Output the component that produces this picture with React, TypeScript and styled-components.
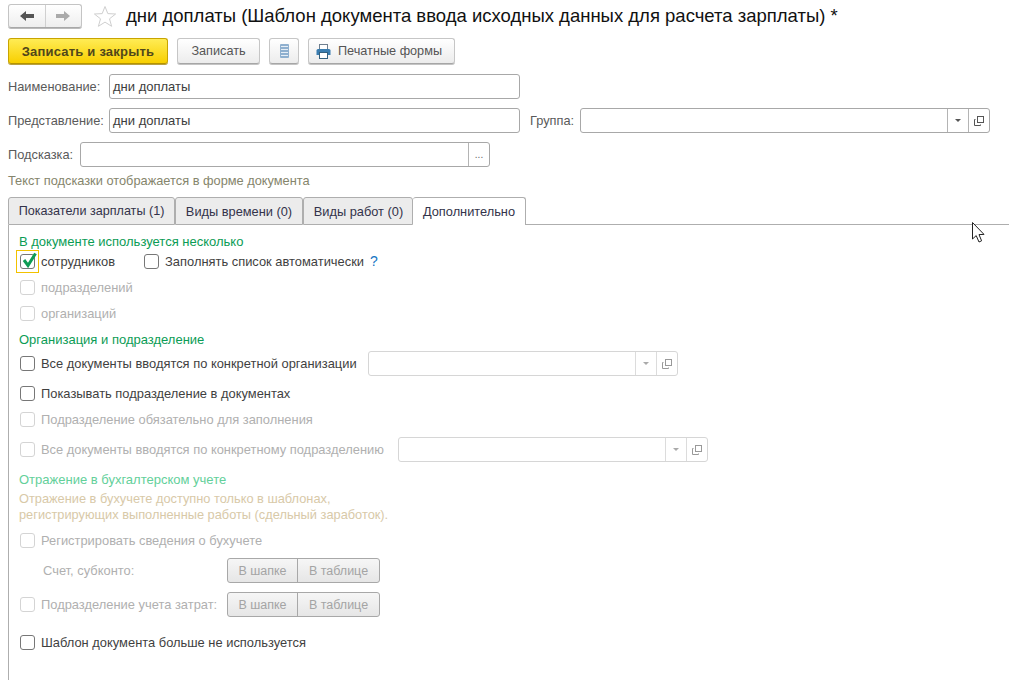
import React from "react";
import styled, { createGlobalStyle } from "styled-components";

const Global = createGlobalStyle`
  html, body { margin: 0; padding: 0; background: #fff; overflow: hidden; }
  body { font-family: "Liberation Sans", Arial, sans-serif; font-size: 13px; color: #4a4a4a; }
  * { box-sizing: border-box; }
`;

const Page = styled.div`
  position: relative;
  width: 1009px;
  height: 680px;
  overflow: hidden;
  padding: 4px 0 0 8px;
  display: flex;
  flex-direction: column;
`;

const TitleBar = styled.div`
  display: flex;
  align-items: center;
  height: 24px;
`;
const NavGroup = styled.div`
  display: flex;
  width: 74px;
  height: 24px;
  border: 1px solid #c4c4c4;
  border-bottom-color: #a8a8a8;
  border-radius: 3px;
  background: linear-gradient(#fff, #eeeeee);
  box-shadow: 0 1px 0 #bbb;
`;
const NavBtn = styled.div<{ $first?: boolean }>`
  flex: 1;
  display: flex;
  align-items: center;
  justify-content: center;
  border-right: ${(p) => (p.$first ? "1px solid #d0d0d0" : "none")};
`;
const StarWrap = styled.div`
  margin-left: 10px;
  width: 25px;
  height: 24px;
  display: flex;
  align-items: center;
  justify-content: center;
`;
const Title = styled.div`
  margin-left: 9px;
  font-size: 18.5px;
  color: #111;
  white-space: nowrap;
`;

const Toolbar = styled.div`
  display: flex;
  align-items: center;
  height: 26px;
  margin-top: 10px;
`;
const Btn = styled.div<{ $w: number; $ml?: number; $pr?: number; $primary?: boolean }>`
  width: ${(p) => p.$w}px;
  height: 26px;
  margin-left: ${(p) => p.$ml ?? 0}px;
  padding-right: ${(p) => p.$pr ?? 0}px;
  display: flex;
  align-items: center;
  justify-content: center;
  gap: 7px;
  border-radius: 3px;
  border: 1px solid ${(p) => (p.$primary ? "#c8a400" : "#c6c6c6")};
  border-bottom-color: ${(p) => (p.$primary ? "#b59400" : "#a6a6a6")};
  background: ${(p) =>
    p.$primary ? "linear-gradient(#ffec55, #f8cf00)" : "linear-gradient(#ffffff, #ececec)"};
  box-shadow: 0 1px 0 ${(p) => (p.$primary ? "#b8a040" : "#c4c4c4")};
  font-weight: ${(p) => (p.$primary ? 700 : 400)};
  font-size: ${(p) => (p.$primary ? "13px" : "12.7px")};
  letter-spacing: ${(p) => (p.$primary ? "0.2px" : "0")};
  color: ${(p) => (p.$primary ? "#50471a" : "#555")};
`;

const FormRow = styled.div<{ $mt: number }>`
  display: flex;
  align-items: center;
  height: 25px;
  margin-top: ${(p) => p.$mt}px;
`;
const FormLabel = styled.span<{ $w: number; $ml?: number }>`
  width: ${(p) => p.$w}px;
  margin-left: ${(p) => p.$ml ?? 0}px;
  color: #5a5a5a;
  font-size: 12.8px;
  white-space: nowrap;
  flex: none;
`;
const Field = styled.div<{ $w: number; $off?: boolean }>`
  width: ${(p) => p.$w}px;
  height: 25px;
  flex: none;
  display: flex;
  align-items: stretch;
  border: 1px solid ${(p) => (p.$off ? "#d6d6d6" : "#a8a8a8")};
  border-radius: 3px;
  background: #fff;
`;
const FieldText = styled.div`
  flex: 1;
  padding-left: 3px;
  color: #3c3c3c;
  line-height: 23px;
`;
const FieldBtn = styled.div<{ $w?: number; $off?: boolean }>`
  width: ${(p) => p.$w ?? 21}px;
  flex: none;
  display: flex;
  align-items: center;
  justify-content: center;
  border-left: 1px solid ${(p) => (p.$off ? "#dcdcdc" : "#b4b4b4")};
  color: #666;
  font-size: 10px;
`;
const Note = styled.div`
  margin-top: 6px;
  height: 16px;
  line-height: 16px;
  font-size: 12.8px;
  color: #85856c;
`;

const Tabs = styled.div`
  display: flex;
  height: 28px;
  margin-top: 8px;
  flex: none;
`;
const Tab = styled.div<{ $w: number; $active?: boolean; $fs?: number; $pl?: number }>`
  width: ${(p) => p.$w}px;
  height: 28px;
  padding-left: ${(p) => p.$pl ?? 0}px;
  display: flex;
  align-items: center;
  justify-content: center;
  font-size: ${(p) => p.$fs ?? 12.8}px;
  border: 1px solid #aeaeae;
  border-left-width: ${(p) => (p.$active ? 0 : 1)}px;
  border-bottom: ${(p) => (p.$active ? "none" : "1px solid #aeaeae")};
  border-radius: 3px 3px 0 0;
  background: ${(p) => (p.$active ? "#fff" : "#ececec")};
  color: #33334a;
`;
const TabRest = styled.div`
  flex: 1;
  border-bottom: 1px solid #aeaeae;
`;
const Panel = styled.div`
  flex: 1;
  border-left: 1px solid #aeaeae;
  padding: 8px 0 0 11px;
`;
const Heading = styled.div<{ $mt?: number; $off?: boolean }>`
  height: 16px;
  line-height: 18px;
  margin: ${(p) => p.$mt ?? 0}px 0 0 -1px;
  color: ${(p) => (p.$off ? "#63d09a" : "#0b9c55")};
`;
const Row = styled.div<{ $mt?: number; $h?: number }>`
  display: flex;
  align-items: center;
  height: ${(p) => p.$h ?? 24}px;
  margin-top: ${(p) => p.$mt ?? 0}px;
`;
const Box = styled.span<{ $off?: boolean }>`
  width: 15px;
  height: 15px;
  flex: none;
  position: relative;
  border: 1px solid ${(p) => (p.$off ? "#d4d4d4" : "#777")};
  border-radius: 3px;
  background: #fff;
`;
const FocusRing = styled.span`
  position: absolute;
  left: -5px;
  top: -5px;
  width: 23px;
  height: 23px;
  border: 1px solid #f2c200;
`;
const Tick = styled.svg`
  position: absolute;
  left: 0;
  top: -3px;
`;
const CheckLabel = styled.span<{ $off?: boolean; $ml?: number; $w?: number }>`
  margin-left: ${(p) => p.$ml ?? 6}px;
  color: ${(p) => (p.$off ? "#b0b0b0" : "#3f3f3f")};
  font-size: 12.9px;
  white-space: nowrap;
  width: ${(p) => (p.$w ? `${p.$w}px` : "auto")};
  flex: none;
`;
const Help = styled.span`
  margin-left: 6px;
  color: #1676c4;
  font-size: 14px;
`;
const Spacer = styled.span<{ $w: number }>`
  width: ${(p) => p.$w}px;
  flex: none;
`;
const Info = styled.div<{ $mt?: number }>`
  height: 16px;
  line-height: 16px;
  font-size: 12.8px;
  margin: ${(p) => p.$mt ?? 0}px 0 0 -1px;
  color: #d8c9a8;
  white-space: nowrap;
`;
const Segmented = styled.div`
  display: flex;
  width: 153px;
  height: 25px;
  flex: none;
  border: 1px solid #a8a8a8;
  border-radius: 3px;
  background: linear-gradient(#f6f6f6, #e6e6e6);
`;
const Segment = styled.div<{ $w: number; $sep?: boolean }>`
  width: ${(p) => p.$w}px;
  display: flex;
  align-items: center;
  justify-content: center;
  border-right: ${(p) => (p.$sep ? "1px solid #a8a8a8" : "none")};
  color: #a4a4a4;
  font-size: 12.5px;
`;
const Cursor = styled.svg`
  position: absolute;
  left: 972px;
  top: 222px;
`;

const ArrowLeft = ({ c }: { c: string }) => (
  <svg width="16" height="12" viewBox="0 0 16 12">
    <path d="M1 6 L7 1 V4 H15 V8 H7 V11 Z" fill={c} />
  </svg>
);
const ArrowRight = ({ c }: { c: string }) => (
  <svg width="16" height="12" viewBox="0 0 16 12">
    <path d="M15 6 L9 1 V4 H1 V8 H9 V11 Z" fill={c} />
  </svg>
);
const Star = () => (
  <svg width="24" height="23" viewBox="0 0 24 23">
    <path d="M12 1.5 L14.8 8.6 L22.6 9 L16.5 13.8 L18.6 21.3 L12 17.1 L5.4 21.3 L7.5 13.8 L1.4 9 L9.2 8.6 Z" fill="#fff" stroke="#cfcfcf" strokeWidth="1" />
  </svg>
);
const ListIcon = () => (
  <svg width="9" height="14" viewBox="0 0 9 14">
    <rect x="0" y="0" width="9" height="14" rx="1" fill="#8fb0cf" />
    <path d="M1 2.5H8M1 5.5H8M1 8.5H8M1 11.5H8" stroke="#e6eef6" strokeWidth="1.1" />
  </svg>
);
const PrintIcon = () => (
  <svg width="15" height="15" viewBox="0 0 15 15">
    <rect x="3.5" y="0.5" width="8" height="5" fill="#fff" stroke="#6f7f8f" />
    <path d="M0.5 6.5 Q0.5 5 2 5 H13 Q14.5 5 14.5 6.5 V11 H0.5 Z" fill="#3a7db0" />
    <rect x="3.5" y="8.5" width="8" height="6" fill="#fff" stroke="#33607f" />
  </svg>
);
const Drop = ({ off }: { off?: boolean }) => (
  <svg width="6" height="3" viewBox="0 0 6 3">
    <path d="M0 0H6L3 3Z" fill={off ? "#aaa" : "#555"} />
  </svg>
);
const OpenIcon = ({ off }: { off?: boolean }) => (
  <svg width="10" height="10" viewBox="0 0 10 10" fill="none" stroke={off ? "#999" : "#555"}>
    <rect x="3.5" y="0.5" width="6" height="6" />
    <path d="M1.5 3.5H0.5V9.5H6.5V8.5" />
  </svg>
);

const Check = ({ label, off, checked, ml }: { label: string; off?: boolean; checked?: boolean; ml?: number }) => (
  <>
    <Box $off={off}>
      {checked && (
        <>
          <FocusRing />
          <Tick width="16" height="16" viewBox="0 0 16 16">
            <path d="M3 8 L7 13.5 L14.5 1.5" fill="none" stroke="#0f9c55" strokeWidth="3" />
          </Tick>
        </>
      )}
    </Box>
    <CheckLabel $off={off} $ml={ml}>{label}</CheckLabel>
  </>
);

export default function App() {
  return (
    <Page>
      <Global />
      <TitleBar>
        <NavGroup>
          <NavBtn $first><ArrowLeft c="#555" /></NavBtn>
          <NavBtn><ArrowRight c="#aaa" /></NavBtn>
        </NavGroup>
        <StarWrap><Star /></StarWrap>
        <Title>дни доплаты (Шаблон документа ввода исходных данных для расчета зарплаты) *</Title>
      </TitleBar>
      <Toolbar>
        <Btn $w={160} $primary>Записать и закрыть</Btn>
        <Btn $w={83} $ml={9}>Записать</Btn>
        <Btn $w={30} $ml={9}><ListIcon /></Btn>
        <Btn $w={147} $ml={9} $pr={5}><PrintIcon />Печатные формы</Btn>
      </Toolbar>
      <FormRow $mt={10}>
        <FormLabel $w={101}>Наименование:</FormLabel>
        <Field $w={411}><FieldText>дни доплаты</FieldText></Field>
      </FormRow>
      <FormRow $mt={9}>
        <FormLabel $w={101}>Представление:</FormLabel>
        <Field $w={411}><FieldText>дни доплаты</FieldText></Field>
        <FormLabel $w={50} $ml={10}>Группа:</FormLabel>
        <Field $w={410}>
          <FieldText />
          <FieldBtn><Drop /></FieldBtn>
          <FieldBtn><OpenIcon /></FieldBtn>
        </Field>
      </FormRow>
      <FormRow $mt={9}>
        <FormLabel $w={72}>Подсказка:</FormLabel>
        <Field $w={410}>
          <FieldText />
          <FieldBtn>...</FieldBtn>
        </Field>
      </FormRow>
      <Note>Текст подсказки отображается в форме документа</Note>
      <Tabs>
        <Tab $w={167} $fs={12.6}>Показатели зарплаты (1)</Tab>
        <Tab $w={128}>Виды времени (0)</Tab>
        <Tab $w={110} $pl={1}>Виды работ (0)</Tab>
        <Tab $w={113} $active>Дополнительно</Tab>
        <TabRest />
      </Tabs>
      <Panel>
        <Heading>В документе используется несколько</Heading>
        <Row>
          <Check label="сотрудников" checked />
          <Spacer $w={29} />
          <Check label="Заполнять список автоматически" />
          <Help>?</Help>
        </Row>
        <Row $mt={2}><Check label="подразделений" off /></Row>
        <Row $mt={2}><Check label="организаций" off /></Row>
        <Heading $mt={6}>Организация и подразделение</Heading>
        <Row $mt={4} $h={25}>
          <Check label="Все документы вводятся по конкретной организации" />
          <Spacer $w={11} />
          <Field $w={310} $off>
            <FieldText />
            <FieldBtn $off><Drop off /></FieldBtn>
            <FieldBtn $off><OpenIcon off /></FieldBtn>
          </Field>
        </Row>
        <Row $mt={5}><Check label="Показывать подразделение в документах" /></Row>
        <Row $mt={2}><Check label="Подразделение обязательно для заполнения" off /></Row>
        <Row $mt={6} $h={25}>
          <Check label="Все документы вводятся по конкретному подразделению" off />
          <Spacer $w={14} />
          <Field $w={310} $off>
            <FieldText />
            <FieldBtn $off><Drop off /></FieldBtn>
            <FieldBtn $off><OpenIcon off /></FieldBtn>
          </Field>
        </Row>
        <Heading $mt={9} $off>Отражение в бухгалтерском учете</Heading>
        <Info $mt={4}>Отражение в бухучете доступно только в шаблонах,</Info>
        <Info>регистрирующих выполненные работы (сдельный заработок).</Info>
        <Row $mt={5}><Check label="Регистрировать сведения о бухучете" off /></Row>
        <Row $mt={6} $h={25}>
          <CheckLabel $off $ml={23} $w={184}>Счет, субконто:</CheckLabel>
          <Segmented>
            <Segment $w={70} $sep>В шапке</Segment>
            <Segment $w={81}>В таблице</Segment>
          </Segmented>
        </Row>
        <Row $mt={9} $h={25}>
          <Box $off />
          <CheckLabel $off $w={186}>Подразделение учета затрат:</CheckLabel>
          <Segmented>
            <Segment $w={70} $sep>В шапке</Segment>
            <Segment $w={81}>В таблице</Segment>
          </Segmented>
        </Row>
        <Row $mt={13}><Check label="Шаблон документа больше не используется" /></Row>
      </Panel>
      <Cursor width="14" height="22" viewBox="0 0 14 22">
        <path d="M0.5 0.5 V17 L4.2 13.6 L7 20 L9.6 18.8 L7 12.6 L12 12.4 Z" fill="#fff" stroke="#222" strokeWidth="1" />
      </Cursor>
    </Page>
  );
}
